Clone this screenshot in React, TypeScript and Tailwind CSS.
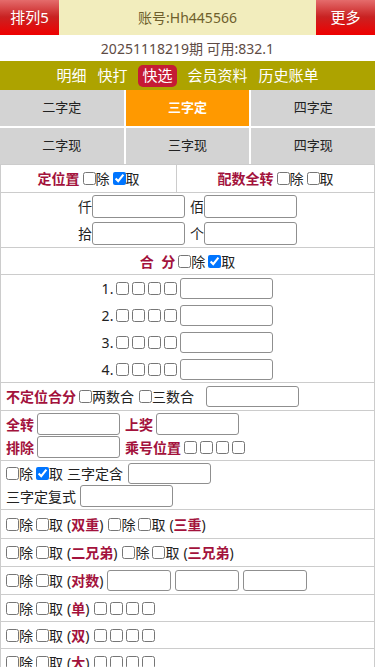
import React from 'react';

const lbl = 'text-[#a3123c] font-bold';

function Cb({ checked }: { checked?: boolean }) {
  return (
    <input
      type="checkbox"
      defaultChecked={checked}
      className="ml-[3px] h-[13px] w-[13px] shrink-0"
    />
  );
}

function Box({ size }: { size: string }) {
  return (
    <input
      type="text"
      className={`${size} shrink-0 rounded-[3px] border border-[#8f8f8f] bg-white px-1 outline-none`}
    />
  );
}

function ChuQu({ name }: { name: string }) {
  return (
    <>
      <Cb />
      <span>除</span>
      <Cb />
      <span>取</span>
      <span className="ml-1">(</span>
      <span className={lbl}>{name}</span>
      <span>)</span>
    </>
  );
}

function Four() {
  return (
    <span className="flex items-center">
      <Cb />
      <Cb />
      <Cb />
      <Cb />
    </span>
  );
}

export default function App() {
  const tabs = ['二字定', '三字定', '四字定', '二字现', '三字现', '四字现'];
  const nav = ['明细', '快打', '快选', '会员资料', '历史账单'];

  return (
    <div className="min-h-screen w-[375px] bg-white font-['Noto_Sans','Noto_Sans_CJK_SC',sans-serif] text-[14px] text-[#222]">
      {/* Header */}
      <div className="flex h-[35px]">
        <div className="flex w-[59px] items-center justify-center bg-[linear-gradient(to_bottom,#e46c6c_0%,#c92222_48%,#ef0000_100%)] text-[15px] text-white">
          排列5
        </div>
        <div className="flex flex-1 items-center justify-center bg-[#f2edbd] text-[#6f5f2c]">
          账号:Hh445566
        </div>
        <div className="flex w-[59px] items-center justify-center bg-[linear-gradient(to_bottom,#e46c6c_0%,#c92222_48%,#ef0000_100%)] text-[15px] text-white">
          更多
        </div>
      </div>

      <div className="flex h-[26px] items-center justify-center text-[#5e4b44]">
        20251118219期 可用:832.1
      </div>

      {/* Nav */}
      <div className="flex h-[29px] items-center justify-center gap-[11px] bg-[#ada300] text-[15px] text-white">
        {nav.map((n) =>
          n === '快选' ? (
            <span key={n} className="flex h-[22px] items-center rounded-[5px] bg-[#c51b35] px-1">
              {n}
            </span>
          ) : (
            <span key={n}>{n}</span>
          )
        )}
      </div>

      {/* Tabs */}
      <div className="grid grid-cols-3 gap-[2px] text-[13px]">
        {tabs.map((t) => (
          <div
            key={t}
            className={`flex h-[36px] items-center justify-center ${
              t === '三字定' ? 'bg-[#ff9900] font-bold text-white' : 'bg-[#d3d3d3] text-[#222]'
            }`}
          >
            {t}
          </div>
        ))}
      </div>

      {/* Form table */}
      <div className="border-x border-t border-[#cccccc]">
        <div className="grid h-[28px] grid-cols-[176px_1fr] border-b border-[#cccccc]">
          <div className="flex items-center justify-center border-r border-[#cccccc]">
            <span className={lbl}>定位置</span>
            <Cb />
            <span>除</span>
            <Cb checked />
            <span>取</span>
          </div>
          <div className="flex items-center justify-center">
            <span className={lbl}>配数全转</span>
            <Cb />
            <span>除</span>
            <Cb />
            <span>取</span>
          </div>
        </div>

        <div className="flex flex-col items-center gap-[4px] border-b border-[#cccccc] py-[2px]">
          <div className="flex items-center">
            <span>仟</span>
            <Box size="w-[93px] h-[23px]" />
            <span className="ml-[5px]">佰</span>
            <Box size="w-[93px] h-[23px]" />
          </div>
          <div className="flex items-center">
            <span>拾</span>
            <Box size="w-[93px] h-[23px]" />
            <span className="ml-[5px]">个</span>
            <Box size="w-[93px] h-[23px]" />
          </div>
        </div>

        <div className="flex h-[27px] items-center justify-center border-b border-[#cccccc]">
          <span className={lbl}>合&nbsp;&nbsp;分</span>
          <Cb />
          <span>除</span>
          <Cb checked />
          <span>取</span>
        </div>

        <div className="flex flex-col items-center gap-[6px] border-b border-[#cccccc] pt-[3px] pb-[2px]">
          {[1, 2, 3, 4].map((n) => (
            <div key={n} className="flex items-center">
              <span>{n}.</span>
              <Four />
              <span className="ml-[3px]">
                <Box size="w-[93px] h-[21px]" />
              </span>
            </div>
          ))}
        </div>

        <div className="flex h-[28px] items-center border-b border-[#cccccc] pl-[5px]">
          <span className={lbl}>不定位合分</span>
          <Cb />
          <span>两数合</span>
          <span className="ml-[2px]" />
          <Cb />
          <span>三数合</span>
          <span className="ml-[12px]">
            <Box size="w-[93px] h-[21px]" />
          </span>
        </div>

        <div className="flex flex-col gap-px border-b border-[#cccccc] py-[2px] pl-[5px]">
          <div className="flex items-center">
            <span className={`${lbl} w-[31px]`}>全转</span>
            <Box size="w-[83px] h-[22px]" />
            <span className={`${lbl} ml-[5px] w-[31px]`}>上奖</span>
            <Box size="w-[83px] h-[22px]" />
          </div>
          <div className="flex items-center">
            <span className={`${lbl} w-[31px]`}>排除</span>
            <Box size="w-[83px] h-[22px]" />
            <span className={`${lbl} ml-[5px]`}>乘号位置</span>
            <Four />
          </div>
        </div>

        <div className="flex flex-col gap-px border-b border-[#cccccc] py-[2px] pl-[2px]">
          <div className="flex items-center">
            <Cb />
            <span>除</span>
            <Cb checked />
            <span>取</span>
            <span className="ml-1">三字定含</span>
            <span className="ml-[5px]">
              <Box size="w-[83px] h-[21px]" />
            </span>
          </div>
          <div className="flex items-center pl-[3px]">
            <span>三字定复式</span>
            <span className="ml-[4px]">
              <Box size="w-[93px] h-[22px]" />
            </span>
          </div>
        </div>

        <div className="flex h-[29px] items-center border-b border-[#cccccc] pl-[2px]">
          <ChuQu name="双重" />
          <span className="ml-[2px]" />
          <ChuQu name="三重" />
        </div>

        <div className="flex h-[28px] items-center border-b border-[#cccccc] pl-[2px]">
          <ChuQu name="二兄弟" />
          <span className="ml-[2px]" />
          <ChuQu name="三兄弟" />
        </div>

        <div className="flex h-[28px] items-center gap-[4px] border-b border-[#cccccc] pl-[2px]">
          <span className="flex items-center">
            <ChuQu name="对数" />
          </span>
          <Box size="w-[64px] h-[21px]" />
          <Box size="w-[64px] h-[21px]" />
          <Box size="w-[64px] h-[21px]" />
        </div>

        {['单', '双', '大'].map((n) => (
          <div key={n} className="flex h-[27px] items-center border-b border-[#cccccc] pl-[2px]">
            <ChuQu name={n} />
            <span className="ml-[2px]" />
            <Four />
          </div>
        ))}
      </div>
    </div>
  );
}
